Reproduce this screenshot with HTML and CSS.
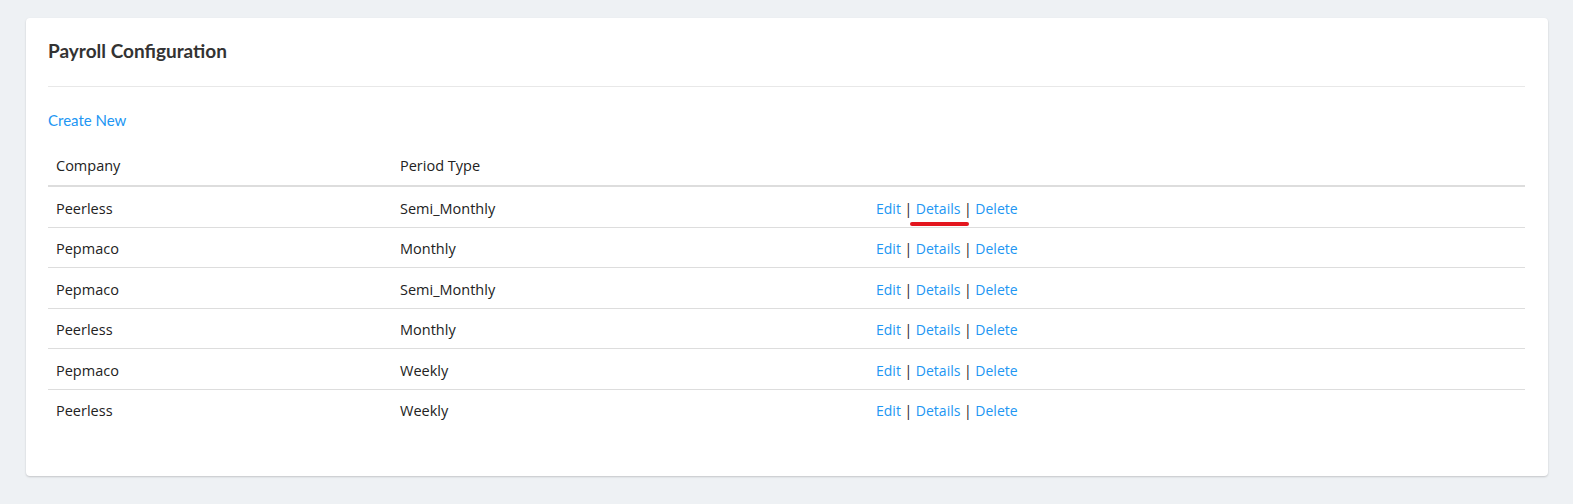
FILE: index.html
```html
<!DOCTYPE html>
<html>
<head>
<meta charset="utf-8">
<link rel="stylesheet" href="styles.css">
</head>
<body>
<div class="page">
  <div class="card">
    <div class="card-header">
      <h2 class="title">Payroll Configuration</h2>
    </div>
    <div class="card-body">
      <a class="create" href="#">Create New</a>
      <table class="grid">
        <thead>
          <tr><th class="c1">Company</th><th class="c2">Period Type</th><th></th></tr>
        </thead>
        <tbody>
          <tr><td>Peerless</td><td>Semi_Monthly</td><td class="actions"><a href="#">Edit</a> | <a href="#" class="marked">Details<span class="mark"></span></a> | <a href="#">Delete</a></td></tr>
          <tr><td>Pepmaco</td><td>Monthly</td><td class="actions"><a href="#">Edit</a> | <a href="#">Details</a> | <a href="#">Delete</a></td></tr>
          <tr><td>Pepmaco</td><td>Semi_Monthly</td><td class="actions"><a href="#">Edit</a> | <a href="#">Details</a> | <a href="#">Delete</a></td></tr>
          <tr><td>Peerless</td><td>Monthly</td><td class="actions"><a href="#">Edit</a> | <a href="#">Details</a> | <a href="#">Delete</a></td></tr>
          <tr><td>Pepmaco</td><td>Weekly</td><td class="actions"><a href="#">Edit</a> | <a href="#">Details</a> | <a href="#">Delete</a></td></tr>
          <tr><td>Peerless</td><td>Weekly</td><td class="actions"><a href="#">Edit</a> | <a href="#">Details</a> | <a href="#">Delete</a></td></tr>
        </tbody>
      </table>
    </div>
  </div>
</div>
</body>
</html>
```
FILE: styles.css
```css
html, body {
  margin: 0;
  padding: 0;
  background: #eef1f4;
}
.page {
  padding: 18px 25px 30px 26px;
}
.card {
  background: #fff;
  border-radius: 4px;
  box-shadow: 0 1px 2px rgba(0, 0, 0, 0.18);
  padding: 0 23px 47px 22px;
}
.card-header {
  padding: 22px 0 24px;
  border-bottom: 1px solid #e8e8e8;
}
.title {
  margin: 0;
  font-family: Lato, "Liberation Sans", sans-serif;
  font-weight: 700;
  font-size: 19px;
  line-height: 22px;
  color: #333;
}
.card-body {
  padding-top: 23px;
}
.create {
  display: block;
  font-family: Lato, "Liberation Sans", sans-serif;
  font-size: 15px;
  line-height: 20px;
  color: #2196f3;
  text-decoration: none;
  margin-bottom: 14px;
}
.grid {
  width: 100%;
  table-layout: fixed;
  border-collapse: collapse;
  font-family: "Open Sans", "Noto Sans", sans-serif;
  font-size: 14.5px;
  color: #222;
}
.grid th {
  text-align: left;
  font-weight: 400;
  height: 42px;
  padding: 2px 8px 0;
  box-sizing: border-box;
  border-bottom: 2px solid #dddddd;
  line-height: 20px;
}
.grid th.c1 { width: 344px; }
.grid th.c2 { width: 476px; }
.grid td {
  padding: 11.75px 8px 7.75px;
  line-height: 20px;
  border-bottom: 1px solid #dddddd;
}
.grid td.actions {
  font-size: 14px;
}
.grid tbody tr:last-child td {
  border-bottom: none;
}
.grid a {
  color: #2196f3;
  text-decoration: none;
}
.marked {
  position: relative;
}
.mark {
  position: absolute;
  left: -6px;
  right: -9px;
  top: 23px;
  height: 4px;
  border-radius: 2px;
  background: #e3151e;
}
```
